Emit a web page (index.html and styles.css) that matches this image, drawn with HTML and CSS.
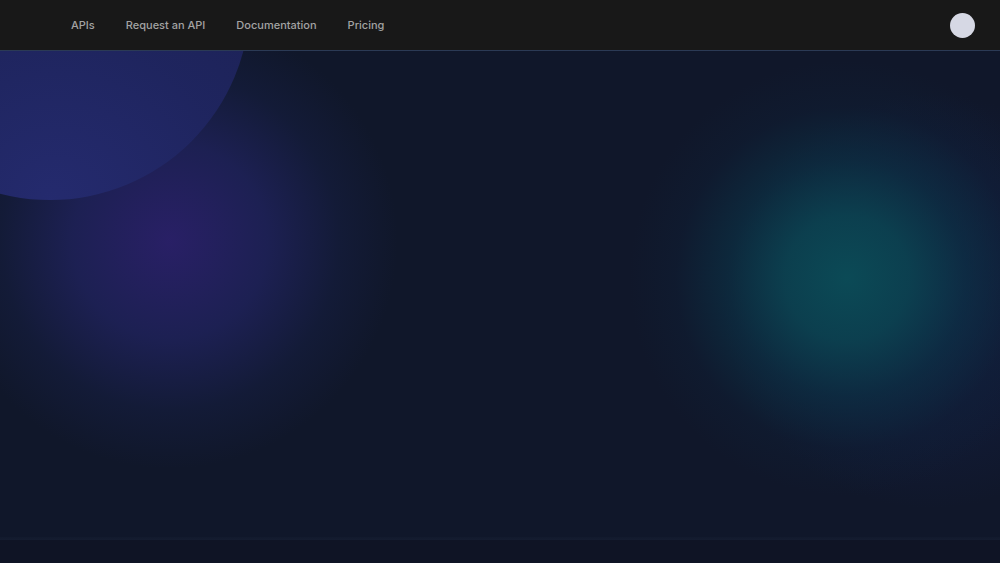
FILE: index.html
```html
<!DOCTYPE html>
<html lang="en">
<head>
<meta charset="utf-8">
<title>APIs</title>
<link rel="stylesheet" href="styles.css">
</head>
<body>
<header class="topbar">
  <nav class="nav">
    <a class="nav-link" href="#">APIs</a>
    <a class="nav-link" href="#">Request an API</a>
    <a class="nav-link" href="#">Documentation</a>
    <a class="nav-link" href="#">Pricing</a>
  </nav>
  <div class="avatar"></div>
</header>
<main class="hero">
  <div class="orb orb-circle"></div>
  <div class="orb orb-purple"></div>
  <div class="orb orb-blue-right"></div>
  <div class="orb orb-teal"></div>
</main>
<div class="divider"></div>
<footer class="footer"></footer>
</body>
</html>
```

FILE: styles.css
```css
* { box-sizing: border-box; }
html, body { margin: 0; padding: 0; }
body {
  background: #0f1425;
  font-family: Inter, "Noto Sans", sans-serif;
  height: 563px;
  overflow: hidden;
}
.topbar {
  height: 51px;
  background: #181818;
  border-bottom: 1px solid #2b3a55;
  display: flex;
  align-items: center;
  justify-content: space-between;
  padding: 0 25px 0 71px;
  position: relative;
  z-index: 2;
}
.nav {
  display: flex;
  gap: 31px;
  align-items: center;
}
.nav-link {
  color: #a3a3a3;
  font-size: 11px;
  font-weight: 500;
  text-decoration: none;
  letter-spacing: 0;
}
.avatar {
  width: 25px;
  height: 25px;
  border-radius: 50%;
  background: #d6d8e4;
}
.hero {
  position: relative;
  height: 486px;
  background: #10172a;
  overflow: hidden;
}
.orb { position: absolute; border-radius: 50%; }
.orb-purple {
  left: -60px;
  top: -40px;
  width: 460px;
  height: 460px;
  background: radial-gradient(circle at 50% 50%, rgba(42,32,105,0.95) 0%, rgba(34,36,100,0.7) 30%, rgba(25,34,80,0.35) 52%, rgba(16,23,42,0) 70%);
}
.orb-circle {
  left: -150px;
  top: -251px;
  width: 400px;
  height: 400px;
  background: radial-gradient(circle at 50% 100%, #252b70 0%, #1f2560 40%, #1c2150 100%);
  z-index: 1;
  opacity: 0.95;
}
.orb-blue-right {
  left: 720px;
  top: 40px;
  width: 420px;
  height: 420px;
  background: radial-gradient(circle, rgba(20,40,90,0.45) 0%, rgba(20,35,80,0.25) 45%, rgba(16,23,42,0) 70%);
}
.orb-teal {
  left: 627px;
  top: 7px;
  width: 440px;
  height: 440px;
  background: radial-gradient(circle, rgba(11,74,86,1) 0%, rgba(11,68,82,0.88) 20%, rgba(11,52,72,0.6) 38%, rgba(14,34,58,0.3) 55%, rgba(16,23,42,0) 70%);
}
.divider {
  height: 3px;
  background: linear-gradient(#121a2d, #151c30);
}
.footer {
  height: 23px;
  background: #0f1425;
}
```
